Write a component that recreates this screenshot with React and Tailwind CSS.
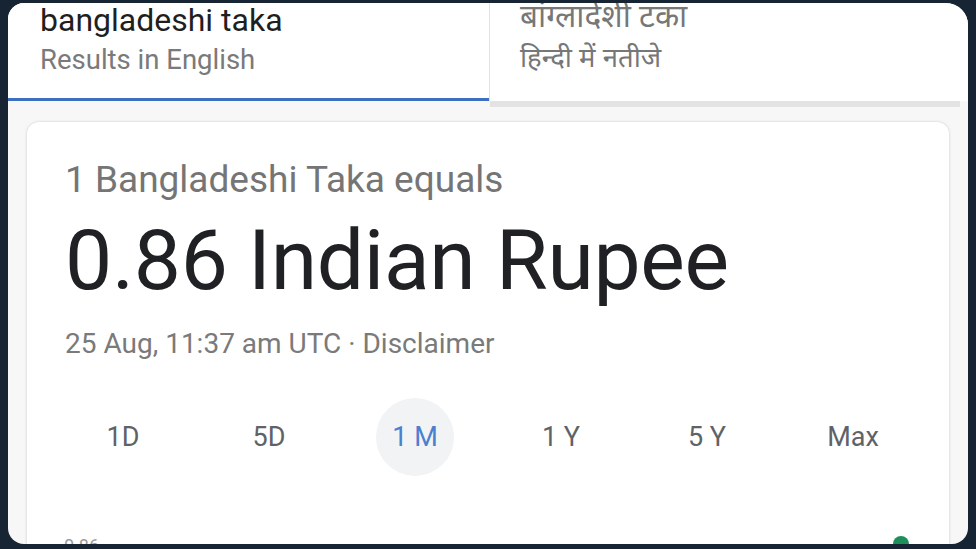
export default function App() {
  const ranges = ["1D", "5D", "1 M", "1 Y", "5 Y", "Max"];
  const active = "1 M";
  const hindi = { fontFamily: "'Noto Sans Devanagari', 'Noto Sans', 'Lohit Devanagari', sans-serif" };

  return (
    <div
      className="w-[976px] h-[549px] overflow-hidden bg-[#172433] pt-[3px] px-[8px]"
      style={{ fontFamily: "Roboto, 'Noto Sans', Arial, sans-serif" }}
    >
      <div className="h-[541px] bg-[#f7f7f7] rounded-tl-[16px] rounded-tr-[22px] rounded-b-[16px] overflow-hidden">
        {/* tabs */}
        <div className="flex h-[98px] bg-white">
          <div className="w-[481px] border-b-[3px] border-[#3d6fc0] pl-[32px]">
            <div className="text-[32px] leading-[34px] text-[#1f1f1f]">bangladeshi taka</div>
            <div className="text-[27.5px] leading-[34px] text-[#7a7a7a] mt-[6px]">Results in English</div>
          </div>
          <div className="flex-1 border-l border-[#e2e2e2] pl-[30px] relative">
            <div className="text-[31.5px] leading-[34px] text-[#777]" style={hindi}>
              बांग्लादेशी टका
            </div>
            <div className="text-[27.5px] leading-[34px] text-[#777] mt-[6px]" style={hindi}>
              हिन्दी में नतीजे
            </div>
            <div className="absolute left-0 right-[8px] bottom-[-6px] h-[6px] bg-[#e3e3e3]" />
          </div>
        </div>

        {/* result card */}
        <div className="mx-[19px] mt-[21px] h-[460px] bg-white rounded-[12px] shadow-[0_0_3px_rgba(0,0,0,0.18)] pt-[38px] relative">
          <div className="pl-[38px]">
            <div className="text-[37px] leading-[40px] text-[#757575]">1 Bangladeshi Taka equals</div>
            <div className="text-[84px] leading-[100px] text-[#202124] mt-[11px] tracking-[-0.3px]">
              0.86 Indian Rupee
            </div>
            <div className="text-[28px] leading-[32px] text-[#7a7a7a] mt-[17px]">
              25 Aug, 11:37 am UTC · Disclaimer
            </div>
          </div>

          <div className="grid grid-cols-6 px-[23px] mt-[38px]">
            {ranges.map((r) => (
              <div key={r} className="flex justify-center">
                <div
                  className={`h-[78px] w-[78px] rounded-full flex items-center justify-center text-[27px] ${
                    r === active ? "bg-[#f1f3f4] text-[#4b7fd0]" : "text-[#5f6368]"
                  }`}
                >
                  {r}
                </div>
              </div>
            ))}
          </div>

          <div className="absolute left-[37px] top-[414px] text-[18px] leading-[20px] text-[#9a9a9a]">0.86</div>
          <div className="absolute left-[866px] top-[414px] w-[16px] h-[16px] rounded-full bg-[#1e8e5a]" />
        </div>
      </div>
    </div>
  );
}
